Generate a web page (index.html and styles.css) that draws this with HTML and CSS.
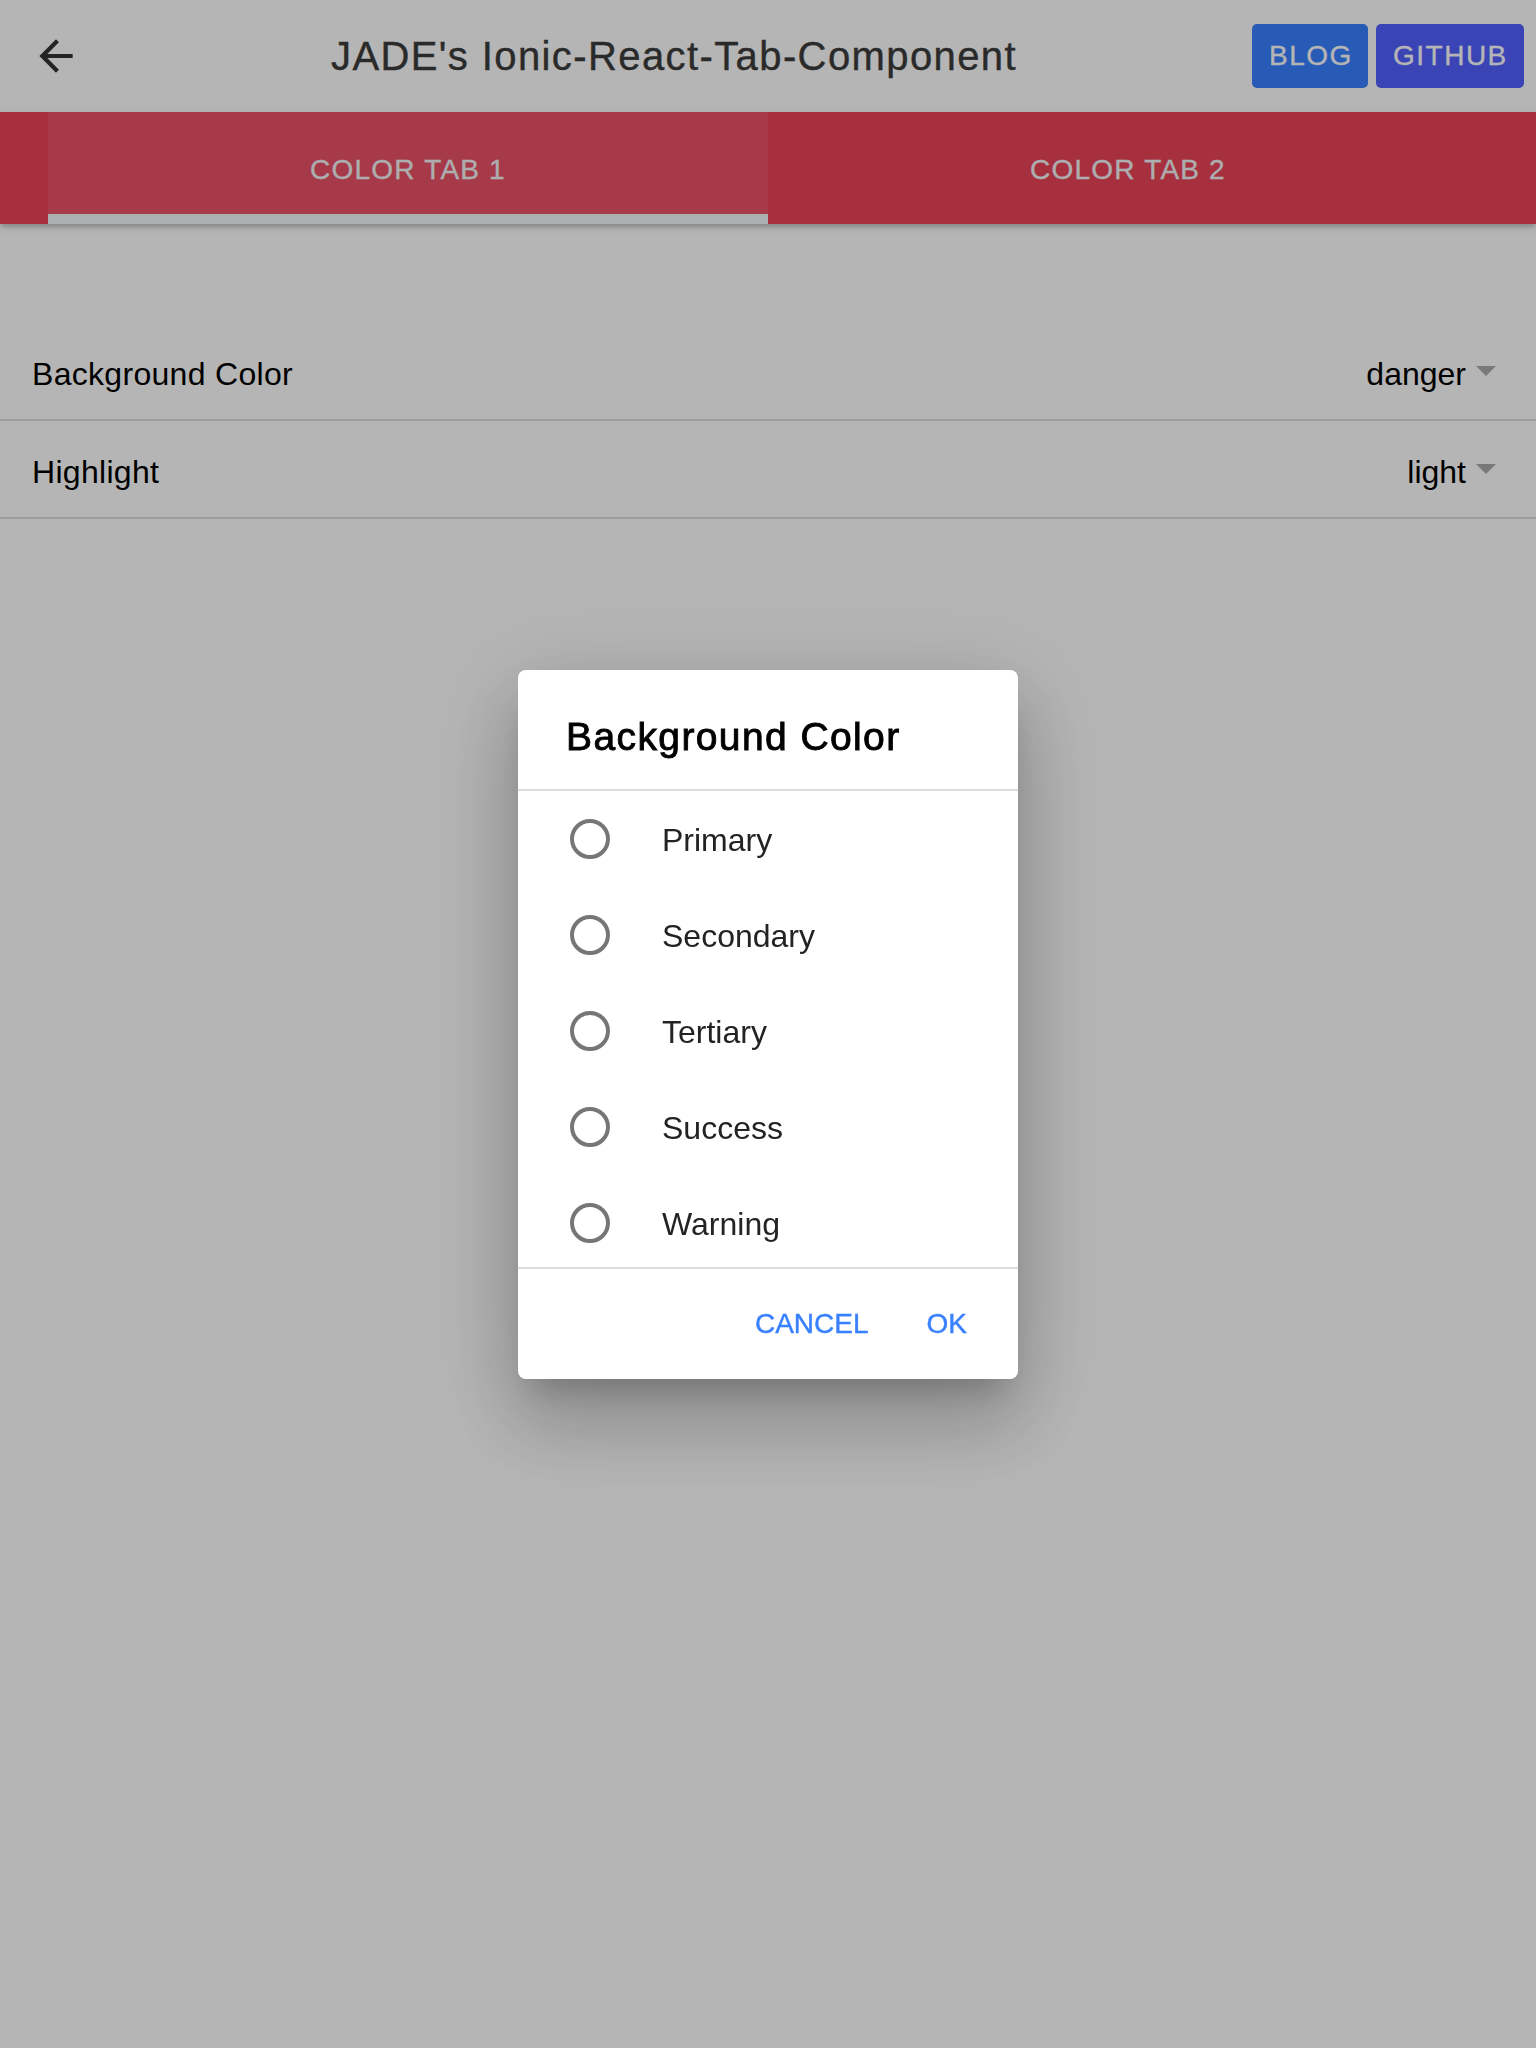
FILE: index.html
```html
<!DOCTYPE html>
<html lang="en">
<head>
<meta charset="utf-8">
<title>JADE's Ionic-React-Tab-Component</title>
<link rel="stylesheet" href="styles.css">
</head>
<body>
<div class="app">
  <header class="toolbar">
    <div class="back">
      <svg class="back-icon" viewBox="0 0 24 24" width="50" height="50" aria-hidden="true"><path d="M20 11H7.83l5.59-5.59L12 4l-8 8 8 8 1.41-1.41L7.83 13H20v-2z"/></svg>
    </div>
    <div class="title">JADE's Ionic-React-Tab-Component</div>
    <div class="actions">
      <span class="btn btn-blog">BLOG</span>
      <span class="btn btn-github">GITHUB</span>
    </div>
  </header>
  <nav class="tabbar">
    <div class="tab tab-selected">COLOR TAB 1</div>
    <div class="tab">COLOR TAB 2</div>
  </nav>
  <main class="content">
    <div class="list">
      <div class="item">
        <span class="item-label">Background Color</span>
        <span class="select">danger<span class="caret"></span></span>
      </div>
      <div class="item">
        <span class="item-label">Highlight</span>
        <span class="select">light<span class="caret"></span></span>
      </div>
    </div>
  </main>
</div>
<div class="backdrop"></div>
<div class="alert-wrap">
  <div class="alert">
    <div class="alert-head">
      <h2 class="alert-title">Background Color</h2>
    </div>
    <div class="radio-group">
      <div class="radio"><span class="radio-icon"></span><span class="radio-label">Primary</span></div>
      <div class="radio"><span class="radio-icon"></span><span class="radio-label">Secondary</span></div>
      <div class="radio"><span class="radio-icon"></span><span class="radio-label">Tertiary</span></div>
      <div class="radio"><span class="radio-icon"></span><span class="radio-label">Success</span></div>
      <div class="radio"><span class="radio-icon"></span><span class="radio-label">Warning</span></div>
    </div>
    <div class="alert-buttons">
      <span class="alert-btn">CANCEL</span>
      <span class="alert-btn">OK</span>
    </div>
  </div>
</div>
</body>
</html>
```
FILE: styles.css
```css
* { box-sizing: border-box; }
html, body { margin: 0; padding: 0; }
body {
  width: 1536px;
  height: 2048px;
  background: #ffffff;
  font-family: "Liberation Sans", Arial, sans-serif;
  overflow: hidden;
}
.app { width: 1536px; }

.toolbar {
  display: flex;
  align-items: center;
  height: 112px;
  background: #ffffff;
}
.back {
  width: 96px;
  height: 112px;
  display: flex;
  align-items: center;
  padding-left: 31px;
}
.back-icon { fill: #333333; display: block; flex: none; }
.title {
  flex: 1;
  text-align: center;
  font-size: 40px;
  letter-spacing: 1.4px;
  color: #3c3c3c;
  -webkit-text-stroke: 0.4px #3c3c3c;
  white-space: nowrap;
}
.actions {
  display: flex;
  gap: 8px;
  padding-right: 12px;
}
.btn {
  height: 64px;
  display: flex;
  align-items: center;
  padding: 0 16px 0 17px;
  border-radius: 5px;
  color: #ffffff;
  font-size: 28px;
  letter-spacing: 1.5px;
  -webkit-text-stroke: 0.3px #ffffff;
}
.btn-blog { background: #3880ff; width: 116px; }
.btn-github { background: #5260ff; width: 148px; }

.tabbar {
  display: flex;
  height: 112px;
  padding: 0 48px;
  background: #eb445a;
  position: relative;
  z-index: 1;
  box-shadow: 0 4px 5px -1px rgba(0,0,0,0.22), 0 2px 12px rgba(0,0,0,0.08);
}
.tab {
  flex: 0 0 720px;
  display: flex;
  align-items: center;
  justify-content: center;
  padding-top: 4px;
  color: #f4f5f8;
  font-size: 28px;
  letter-spacing: 1.2px;
  -webkit-text-stroke: 0.3px #f4f5f8;
}
.tab-selected {
  background: rgba(255,255,255,0.08);
  box-shadow: inset 0 -10px 0 #f4f5f8;
}

.content { padding-top: 99px; }
.item {
  display: flex;
  align-items: center;
  justify-content: space-between;
  height: 98px;
  padding: 6px 40px 0 32px;
  border-bottom: 2px solid rgba(0,0,0,0.13);
  font-size: 32px;
  color: #000000;
}
.item-label { letter-spacing: 0.3px; }
.select { display: flex; align-items: center; }
.caret {
  width: 0;
  height: 0;
  margin-left: 10px;
  margin-top: -6px;
  border-left: 10px solid transparent;
  border-right: 10px solid transparent;
  border-top: 10px solid rgba(0,0,0,0.33);
}

.backdrop {
  position: fixed;
  inset: 0;
  z-index: 10;
  background: rgba(0,0,0,0.29);
}
.alert-wrap {
  position: fixed;
  inset: 0;
  z-index: 11;
  display: flex;
  align-items: center;
  justify-content: center;
}
.alert {
  width: 500px;
  background: #ffffff;
  border-radius: 8px;
  overflow: hidden;
  box-shadow: 0 22px 30px -14px rgba(0,0,0,0.2), 0 48px 76px 6px rgba(0,0,0,0.14), 0 18px 92px 16px rgba(0,0,0,0.12);
}
.alert-head { padding: 43px 48px 28px; }
.alert-title {
  margin: 0;
  font-size: 39px;
  line-height: 48px;
  font-weight: normal;
  letter-spacing: 1.4px;
  color: #000000;
  -webkit-text-stroke: 0.9px #000000;
}
.radio-group {
  height: 480px;
  overflow: hidden;
  border-top: 2px solid #dcdcdc;
  border-bottom: 2px solid #dcdcdc;
}
.radio {
  display: flex;
  align-items: center;
  height: 96px;
  padding-left: 52px;
}
.radio-icon {
  width: 40px;
  height: 40px;
  border: 4px solid #767676;
  border-radius: 50%;
  flex: none;
}
.radio-label {
  margin-left: 52px;
  font-size: 32px;
  color: #232323;
  padding-top: 4px;
}
.alert-buttons {
  display: flex;
  justify-content: flex-end;
  align-items: center;
  gap: 18px;
  height: 110px;
  padding-right: 31px;
}
.alert-btn {
  padding: 0 20px;
  font-size: 28px;
  color: #3880ff;
  -webkit-text-stroke: 0.4px #3880ff;
}
```
